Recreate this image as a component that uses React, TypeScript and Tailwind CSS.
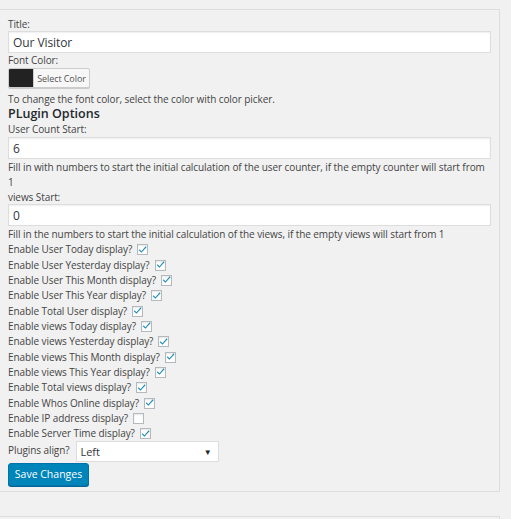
import React from 'react'

const FONT = { fontFamily: '"Open Sans", "Noto Sans", sans-serif' }

const OPTIONS: { label: string; checked: boolean }[] = [
  { label: 'Enable User Today display?', checked: true },
  { label: 'Enable User Yesterday display?', checked: true },
  { label: 'Enable User This Month display?', checked: true },
  { label: 'Enable User This Year display?', checked: true },
  { label: 'Enable Total User display?', checked: true },
  { label: 'Enable views Today display?', checked: true },
  { label: 'Enable views Yesterday display?', checked: true },
  { label: 'Enable views This Month display?', checked: true },
  { label: 'Enable views This Year display?', checked: true },
  { label: 'Enable Total views display?', checked: true },
  { label: 'Enable Whos Online display?', checked: true },
  { label: 'Enable IP address display?', checked: false },
  { label: 'Enable Server Time display?', checked: true },
]

function Check({ checked }: { checked: boolean }) {
  return (
    <span className="ml-[5px] inline-flex h-[11px] w-[11px] items-center justify-center border border-[#b4b9be] bg-white shadow-[inset_0_1px_2px_rgba(0,0,0,0.1)]">
      {checked && (
        <svg width="11" height="11" viewBox="0 0 11 11" className="-mt-[1px]">
          <path d="M2 5.2 L4.2 7.6 L9.4 1.6 L10.4 2.6 L4.2 9.6 L1 6.3 Z" fill="#1e8cbe" />
        </svg>
      )}
    </span>
  )
}

function TextInput({ value }: { value: string }) {
  return (
    <div className="flex h-[22px] w-[483px] items-center border border-[#ddd] bg-white pl-[4px] text-[12px] text-[#32373c] shadow-[inset_0_1px_2px_rgba(0,0,0,0.07)]">
      {value}
    </div>
  )
}

export default function App() {
  return (
    <div
      className="min-h-[519px] bg-[#f1f1f1] pt-[9px] text-[10px] leading-[15px] tracking-[-0.08px] text-[#444]"
      style={FONT}
    >
      <div className="h-[483px] w-[500px] border-t border-r border-b border-[#ddd] pl-[8px] pt-[7px]">
        <div className="leading-[14px]">Title:</div>
        <TextInput value="Our Visitor" />
        <div>Font Color:</div>
        <div className="flex h-[20px] w-[82px] overflow-hidden rounded-[2px] border border-[#ccc] bg-[#f7f7f7] shadow-[0_1px_0_#ccc]">
          <span className="w-[24px] bg-[#222]" />
          <span className="flex flex-1 items-center justify-center border-l border-[#ccc] text-[9px] text-[#555]">
            Select Color
          </span>
        </div>
        <div className="mt-[4px]">To change the font color, select the color with color picker.</div>
        <div className="text-[12.5px] leading-[14px] font-semibold tracking-normal text-[#23282d]">PLugin Options</div>
        <div className="leading-[16px]">User Count Start:</div>
        <TextInput value="6" />
        <div className="mt-[1px] pr-[10px]">
          Fill in with numbers to start the initial calculation of the user counter, if the empty counter will start from 1
        </div>
        <div className="leading-[14px]">views Start:</div>
        <TextInput value="0" />
        <div className="mt-[1px]">Fill in the numbers to start the initial calculation of the views, if the empty views will start from 1</div>
        <div className="flex flex-col">
          {OPTIONS.map((o) => (
            <div key={o.label} className="flex h-[15.35px] items-center">
              <span>{o.label}</span>
              <Check checked={o.checked} />
            </div>
          ))}
        </div>
        <div className="flex items-start">
          <span className="mt-[2px]">Plugins align?</span>
          <div className="ml-[6px] flex h-[21px] w-[143px] items-center justify-between border border-[#ddd] bg-white pl-[4px] pr-[6px] text-[11px] text-[#32373c]">
            <span>Left</span>
            <span className="text-[8px] text-[#222]">▼</span>
          </div>
        </div>
        <button className="mt-[1px] flex h-[23px] w-[81px] items-center justify-center rounded-[3px] border border-[#0073aa] bg-[#0085ba] text-[10.5px] tracking-normal text-white shadow-[0_1px_0_#006799]">
          Save Changes
        </button>
      </div>
      <div className="mt-[24px] h-[10px] w-[500px] border-t border-r border-[#ddd]" />
    </div>
  )
}
